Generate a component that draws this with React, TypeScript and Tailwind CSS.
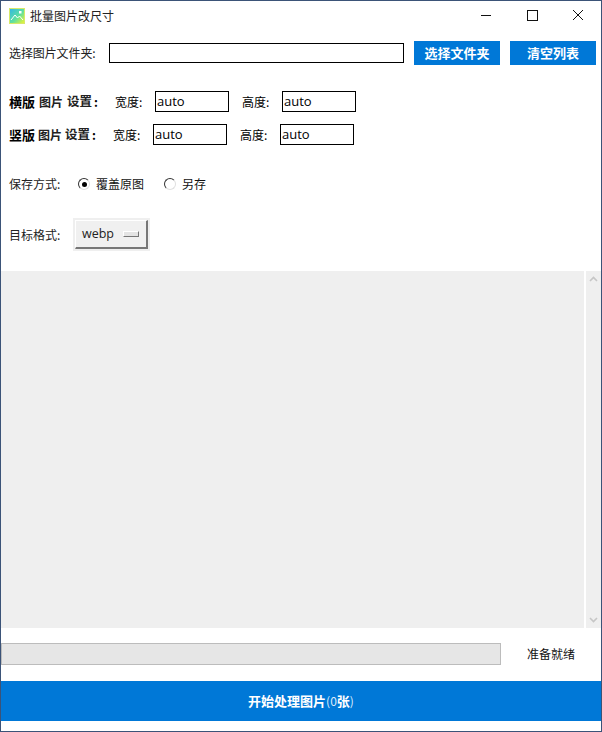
const CJK = "font-['Noto_Sans_CJK_SC','Noto_Sans',sans-serif]";

function Field({ width = 'w-[74px]' }: { width?: string }) {
  return (
    <div className={`${width} h-[21px] border border-black bg-white pl-[1px] text-[13px] leading-[19px] text-black font-['Open_Sans',sans-serif]`}>
      auto
    </div>
  );
}

function Radio({ checked }: { checked?: boolean }) {
  return (
    <span className="flex h-[12px] w-[12px] items-center justify-center rounded-full border border-t-[#333333] border-l-[#333333] border-r-[#e0e0e0] border-b-[#e0e0e0] bg-white">
      {checked && <span className="h-[5px] w-[5px] rounded-full bg-black" />}
    </span>
  );
}

function SizeRow({ parts, gap, spacing }: { parts: string[]; gap: string; spacing: string }) {
  return (
    <div className="flex h-[21px] items-center text-[12px] text-black">
      <span className="flex w-[93px] items-center whitespace-nowrap font-bold">
        <span className="text-[13px]">{parts[0]}</span>
        <span className={`${spacing} text-[12px] font-semibold text-[#222222]`}>{parts[1]}</span>
        <span className={`${spacing} text-[12.5px] font-semibold text-[#222222]`}>{parts[2]}</span>
        <span className="ml-[2px] text-[12px]">:</span>
      </span>
      <span className={gap}>宽度:</span>
      <Field />
      <span className="w-[53px] pl-[13px]">高度:</span>
      <Field />
    </div>
  );
}

export default function App() {
  return (
    <div className={`flex h-[732px] w-[602px] flex-col border border-[#3b5378] bg-white text-[12px] text-[#111111] ${CJK}`}>
      <div className="flex h-[29px] shrink-0 items-center">
        <svg width="16" height="16" viewBox="0 0 16 16" className="ml-[8px] mt-[1px]">
          <defs>
            <linearGradient id="ico" x1="0" y1="0" x2="1" y2="1">
              <stop offset="0" stopColor="#2fb5e8" />
              <stop offset="0.55" stopColor="#5fe0a0" />
              <stop offset="1" stopColor="#f6f52a" />
            </linearGradient>
          </defs>
          <rect x="0.5" y="0.5" width="15" height="15" fill="url(#ico)" stroke="#d8e86a" />
          <path d="M2 12 L6 7 L8.5 10 L10.5 8 L14 12" fill="none" stroke="#ffffff" strokeWidth="1" />
          <rect x="10" y="3" width="2.5" height="2.5" fill="#ffffff" />
        </svg>
        <span className="ml-[5px] text-[12px] text-[#222222]">批量图片改尺寸</span>
        <div className="ml-auto flex items-center">
          <svg width="46" height="29" viewBox="0 0 46 29">
            <path d="M18 14.5 H28" stroke="#111111" strokeWidth="1" />
          </svg>
          <svg width="46" height="29" viewBox="0 0 46 29">
            <rect x="18.5" y="9.5" width="10" height="10" fill="none" stroke="#111111" strokeWidth="1" />
          </svg>
          <svg width="46" height="29" viewBox="0 0 46 29">
            <path d="M18 9 L28 19 M28 9 L18 19" stroke="#111111" strokeWidth="1" />
          </svg>
        </div>
      </div>

      <div className="mt-[11px] flex h-[24px] shrink-0 items-center pl-[8px] pr-[5px]">
        <span className="w-[100px] text-[#222222] tracking-[-0.1px]">选择图片文件夹:</span>
        <div className="h-[20px] w-[295px] border border-black bg-white" />
        <button className="ml-[10px] h-[24px] w-[86px] bg-[#0078d7] text-[13px] font-bold text-white">选择文件夹</button>
        <button className="ml-[10px] h-[24px] w-[86px] bg-[#0078d7] text-[13px] font-bold text-white">清空列表</button>
      </div>

      <div className="mt-[26px] flex shrink-0 flex-col gap-[12px] pl-[8px]">
        <SizeRow parts={['横版', '图片', '设置']} gap="ml-[13px] w-[40px]" spacing="ml-[4px]" />
        <SizeRow parts={['竖版', '图片', '设置']} gap="ml-[11px] w-[40px]" spacing="ml-[3px]" />
      </div>

      <div className="mt-[29px] flex h-[20px] shrink-0 items-center pl-[8px]">
        <span className="w-[69px] text-[#222222]">保存方式:</span>
        <Radio checked />
        <span className="ml-[6px] w-[68px] text-[#111111]">覆盖原图</span>
        <Radio />
        <span className="ml-[6px] text-[#111111]">另存</span>
      </div>

      <div className="mt-[24px] flex h-[33px] shrink-0 items-center pl-[8px]">
        <span className="w-[64px] text-[#222222]">目标格式:</span>
        <div className="border-2 border-[#efefef]">
          <div className="flex h-[29px] w-[73px] items-center justify-between border-b-2 border-l border-r-2 border-t border-t-white border-l-white border-r-[#777777] border-b-[#777777] bg-[#f0f0f0] pl-[6px] pr-[7px] text-[12.5px] text-[#222222] font-['Open_Sans',sans-serif]">
            webp
            <span className="h-[6px] w-[16px] border border-t-white border-l-white border-r-[#777777] border-b-[#777777] bg-[#e4e4e4]" />
          </div>
        </div>
      </div>

      <div className="mt-[20px] flex h-[357px] shrink-0">
        <div className="flex-1 bg-[#efefef]" />
        <div className="ml-[2px] flex w-[15px] flex-col items-center justify-between bg-[#efefef] py-[5px]">
          <svg width="9" height="6" viewBox="0 0 9 6">
            <path d="M1 5 L4.5 1.5 L8 5" fill="none" stroke="#c6c6c6" strokeWidth="1.6" />
          </svg>
          <svg width="9" height="6" viewBox="0 0 9 6">
            <path d="M1 1 L4.5 4.5 L8 1" fill="none" stroke="#c6c6c6" strokeWidth="1.6" />
          </svg>
        </div>
      </div>

      <div className="mt-[15px] flex h-[22px] shrink-0 items-center">
        <div className="h-[22px] w-[500px] border border-[#bcbcbc] bg-[#e6e6e6]" />
        <span className="ml-[26px] text-[#111111]">准备就绪</span>
      </div>

      <button className="mt-[16px] flex h-[40px] w-full shrink-0 items-center justify-center bg-[#0078d7] text-[13px] font-bold text-white">
        开始处理图片
        <span className="font-normal text-[12px] text-[#dcebfa]">(0</span>
        张
        <span className="font-normal text-[12px] text-[#dcebfa]">)</span>
      </button>
    </div>
  );
}
